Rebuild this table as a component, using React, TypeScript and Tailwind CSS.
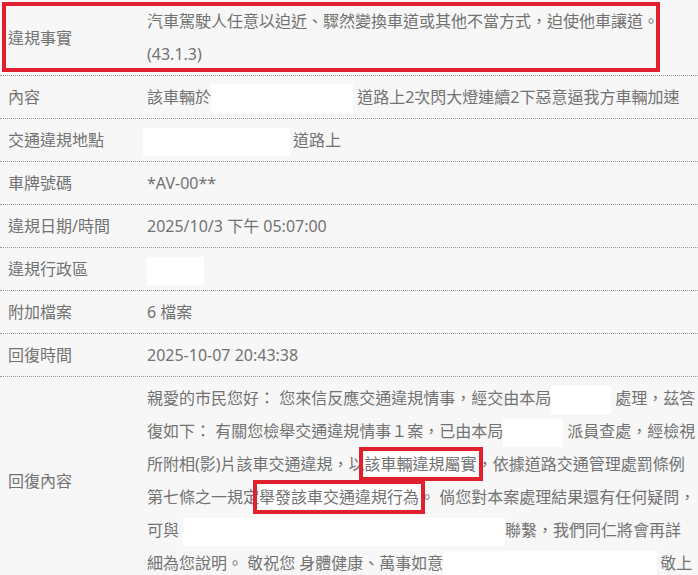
import React from 'react'

const font = { fontFamily: '"Noto Sans", "Noto Sans CJK TC", sans-serif' }

function Blank({ w, className = '' }: { w: string; className?: string }) {
    return <span className={`inline-block h-[28px] bg-white align-middle ${w} ${className}`} />
}

function Mark({ children }: { children: React.ReactNode }) {
    return (
        <span className="bg-white outline-4 outline-[#e0202e] outline-offset-[2px]">{children}</span>
    )
}

function Row({ label, children, first = false }: { label: string; children: React.ReactNode; first?: boolean }) {
    return (
        <div className="relative flex border-b border-dotted border-[#9a9a9a] pt-[5px] pb-[4px]">
            <div className="w-[147px] shrink-0 pl-2 flex items-center">{label}</div>
            <div className="flex-1 whitespace-nowrap">{children}</div>
            {first && (
                <div className="absolute left-[2px] top-[2px] w-[658px] h-[70px] border-4 border-[#e0202e]" />
            )}
        </div>
    )
}

export default function App() {
    return (
        <div className="min-h-screen bg-[#f7f7f7] text-[#727272] text-[16px] leading-[33px]" style={font}>
            <Row label="違規事實" first>
                汽車駕駛人任意以迫近、驟然變換車道或其他不當方式，迫使他車讓道。
                <br />
                (43.1.3)
            </Row>
            <Row label="內容">
                該車輛於<Blank w="w-[142px]" className="h-[30px]" /> 道路上2次閃大燈連續2下惡意逼我方車輛加速
            </Row>
            <Row label="交通違規地點">
                <Blank w="w-[147px]" className="-ml-1 mr-[3px]" />道路上
            </Row>
            <Row label="車牌號碼">*AV-00**</Row>
            <Row label="違規日期/時間">2025/10/3 下午 05:07:00</Row>
            <Row label="違規行政區">
                <Blank w="w-[57px]" className="h-[21px]" />
            </Row>
            <Row label="附加檔案">6 檔案</Row>
            <Row label="回復時間">2025-10-07 20:43:38</Row>
            <Row label="回復內容">
                親愛的市民您好： 您來信反應交通違規情事，經交由本局<Blank w="w-[60px]" /> 處理，茲答
                <br />
                復如下： 有關您檢舉交通違規情事１案，已由本局<Blank w="w-[60px]" /> 派員查處，經檢視
                <br />
                所附相(影)片該車交通違規，以<Mark>該車輛違規屬實</Mark>，依據道路交通管理處罰條例
                <br />
                第七條之一規定<Mark>舉發該車交通違規行為</Mark>。 倘您對本案處理結果還有任何疑問，
                <br />
                可與<Blank w="w-[322px]" className="ml-1" />聯繫，我們同仁將會再詳
                <br />
                細為您說明。 敬祝您 身體健康、萬事如意<Blank w="w-[214px]" className="mr-[3px]" />敬上
            </Row>
        </div>
    )
}
